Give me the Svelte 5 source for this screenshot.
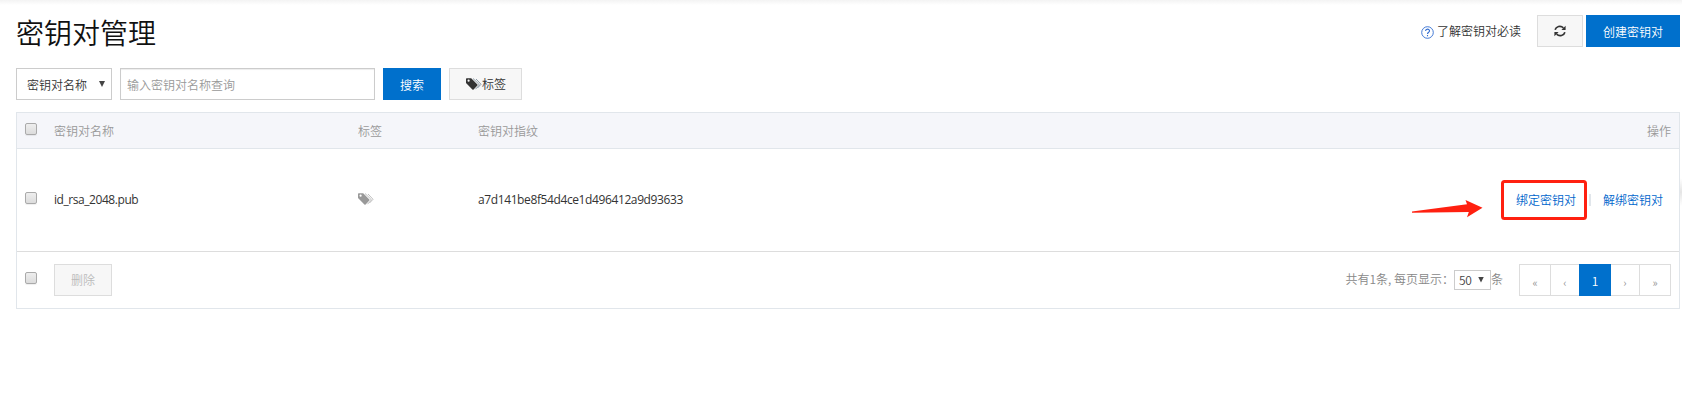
<script>
  const columns = ['密钥对名称', '标签', '密钥对指纹'];
  const row = { name: 'id_rsa_2048.pub', fingerprint: 'a7d141be8f54d4ce1d496412a9d93633' };
</script>

{#snippet tags(color, light)}
  <svg class="tags" width="16" height="12" viewBox="0 0 16 12">
    <path fill={color} fill-rule="evenodd" d="M0 1V5L6.4 11.6Q7 12 7.6 11.5L11.4 7.6Q11.9 7 11.4 6.4L5.2 .3H.7Q0 .3 0 1ZM2.6 1.6A1.1 1.1 0 1 1 2.6 3.8A1.1 1.1 0 1 1 2.6 1.6Z" />
    <path fill="none" stroke={light} stroke-width=".9" d="M7 .5L12.8 6.1Q13.5 6.9 12.8 7.6L9.5 11.2M10 1L15 6.3L11.5 10" />
  </svg>
{/snippet}

<div class="page">
  <header>
    <h1>密钥对管理</h1>
    <a class="guide" href="#guide">
      <svg width="13" height="13" viewBox="0 0 13 13" fill="none" stroke="#2f6bd0">
        <circle cx="6.5" cy="6.5" r="5.8" stroke-width=".9" />
        <path d="M4.6 5.1C4.6 2.5 8.5 2.6 8.5 4.9C8.5 6.2 6.5 6.3 6.5 8M6.5 9.1V10.2" stroke-width="1.1" />
      </svg>
      <span>了解密钥对必读</span>
    </a>
    <button class="btn refresh" aria-label="刷新">
      <svg width="12" height="12" viewBox="0 0 12 12">
        <path d="M1.1 4.8C2 1.5 6.5 .1 9.4 2.8M10.9 7.2C10 10.5 5.5 11.9 2.6 9.2" fill="none" stroke="#333" stroke-width="1.7" />
        <path d="M11.6 .8V5H7.4ZM.4 11.2V7H4.6Z" fill="#333" />
      </svg>
    </button>
    <button class="btn primary create">创建密钥对</button>
  </header>

  <div class="toolbar">
    <div class="select field"><span>密钥对名称</span><i class="caret"></i></div>
    <input class="search" type="text" placeholder="输入密钥对名称查询" />
    <button class="btn primary find">搜索</button>
    <button class="btn tagbtn">{@render tags('#333', '#7f8f9c')}<span>标签</span></button>
  </div>

  <section class="table">
    <div class="line head">
      <i class="check"></i>
      {#each columns as column}<span>{column}</span>{/each}
      <span class="end">操作</span>
    </div>
    <div class="line body">
      <i class="check"></i>
      <span class="latin name">{row.name}</span>
      <span class="cell-tag">{@render tags('#999', '#b5b5b5')}</span>
      <span class="latin">{row.fingerprint}</span>
      <div class="actions">
        <a href="#bind">绑定密钥对</a>
        <i class="sep"></i>
        <a href="#unbind">解绑密钥对</a>
      </div>
      <svg class="mark" width="180" height="44" viewBox="0 0 180 44">
        <path d="M1 32.4L56 25.3L54.5 21L71.5 28.7L56 38.3L57.8 33L1 33.7Z" fill="#ff2010" />
        <rect x="91.5" y="2.5" width="83" height="37" rx="2" fill="none" stroke="#ff2010" stroke-width="3" />
      </svg>
    </div>
    <div class="line foot">
      <i class="check"></i>
      <button class="btn remove" disabled>删除</button>
      <div class="total"><span class="count">共有1条, 每页显示：</span><span class="size"><span>50</span><i class="caret"></i></span><span class="unit">条</span></div>
      <nav>
        <a href="#first">«</a><a href="#prev">‹</a><a class="current" href="#1">1</a><a href="#next">›</a><a href="#last">»</a>
      </nav>
    </div>
  </section>
  <i class="handle"></i>
</div>

<style>
  .page {
    box-sizing: border-box;
    position: relative;
    width: 1682px;
    height: 419px;
    padding: 15px 1px 0 16px;
    background: linear-gradient(#f3f3f3, #fff 5px);
    font: 12px/18px 'Noto Sans CJK SC', sans-serif;
    font-weight: 350;
    color: #333;
    overflow: hidden;
  }
  .page * { box-sizing: border-box; }
  header { display: flex; align-items: center; height: 32px; padding-right: 1px; }
  h1 { margin: 0 auto 0 0; padding-top: 1px; font-size: 28px; line-height: 32px; font-weight: 350; color: #111; }
  a { color: #06c; text-decoration: none; }
  .guide { display: flex; align-items: center; gap: 3px; margin-right: 16px; color: #333; }
  .guide svg { margin-top: 3px; }
  .btn {
    display: flex;
    align-items: center;
    justify-content: center;
    height: 32px;
    padding: 0;
    border: 1px solid #ddd;
    background: #f7f7f7;
    color: #333;
    font: inherit;
  }
  .primary { border-color: #0070cc; background: #0070cc; color: #fff; }
  .refresh { width: 46px; margin-right: 3px; }
  .create { width: 94px; padding-top: 1px; }
  .toolbar { display: flex; gap: 8px; margin-top: 21px; }
  .select { display: flex; align-items: center; justify-content: space-between; width: 96px; height: 32px; padding: 1px 6px 0 10px; border: 1px solid #ccc; background: #fff; }
  .caret { width: 6px; height: 6px; margin-top: -1px; background: #444; clip-path: polygon(0 0, 100% 0, 50% 100%); }
  .search { width: 255px; height: 32px; padding: 0 6px; border: 1px solid #ccc; box-shadow: inset 0 1px 1px #00000013; font: inherit; }
  .search::placeholder { color: #999; }
  .find { width: 58px; padding-top: 1px; }
  .tagbtn { width: 73px; padding-left: 1px; }
  .tags { display: block; }
  .table { margin-top: 12px; border: 1px solid #e1e6eb; width: 1664px; }
  .line { display: grid; grid-template-columns: 37px 304px 120px 1fr auto; align-items: center; }
  .head { height: 36px; background: #f5f6fa; border-bottom: 1px solid #e1e6eb; color: #999; }
  .end { padding-right: 8px; }
  .check { width: 12px; height: 12px; margin-left: 8px; border: 1px solid #aaa; border-radius: 2px; background: linear-gradient(#eee, #dcdcdc); box-shadow: 0 1px 1px #0001; }
  .head .check { margin-top: -3px; }
  .body { position: relative; height: 103px; border-bottom: 1px solid #ddd; }
  .body .check { margin-top: -5px; }
  .latin { font-family: 'Open Sans', sans-serif; font-size: 12px; font-weight: 400; letter-spacing: -.39px; }
  .name { letter-spacing: -.44px; }
  .cell-tag { padding-bottom: 3px; }
  .actions { display: flex; align-items: center; gap: 12px; padding-right: 16px; }
  .sep { width: 2px; height: 12px; margin-left: 1px; background: #e1e6eb; }
  .mark { position: absolute; left: 1394px; top: 30px; pointer-events: none; }
  .foot { height: 56px; grid-template-columns: 37px 58px 1fr auto; color: #888; }
  .foot .check { margin-top: -4px; }
  .remove { width: 58px; color: #bbb; }
  .total { display: flex; align-items: center; justify-content: flex-end; margin-right: 16px; }
  .count, .unit { padding-bottom: 3px; }
  .size { display: flex; align-items: center; justify-content: space-between; width: 37px; height: 20px; padding: 0 6px 0 4px; border: 1px solid #ccc; color: #444; letter-spacing: -.2px; }
  nav { display: flex; height: 32px; margin-right: 8px; border: 1px solid #ddd; border-width: 1px 0; }
  nav a { width: 31px; height: 30px; border-left: 1px solid #ddd; color: #888; font-size: 11px; line-height: 34px; text-align: center; }
  nav a:nth-child(2) { width: 29px; }
  nav a:nth-child(4) { width: 28px; border-left: 0; }
  nav a:last-child { width: 32px; border-right: 1px solid #ddd; }
  nav .current { width: 32px; height: 32px; margin-top: -1px; border: 0; background: #0070cc; color: #fff; font-size: 12px; }
  .handle { position: absolute; right: 0; top: 178px; width: 2px; height: 28px; background: linear-gradient(#fff, #e5e5e5, #fff); }
</style>
